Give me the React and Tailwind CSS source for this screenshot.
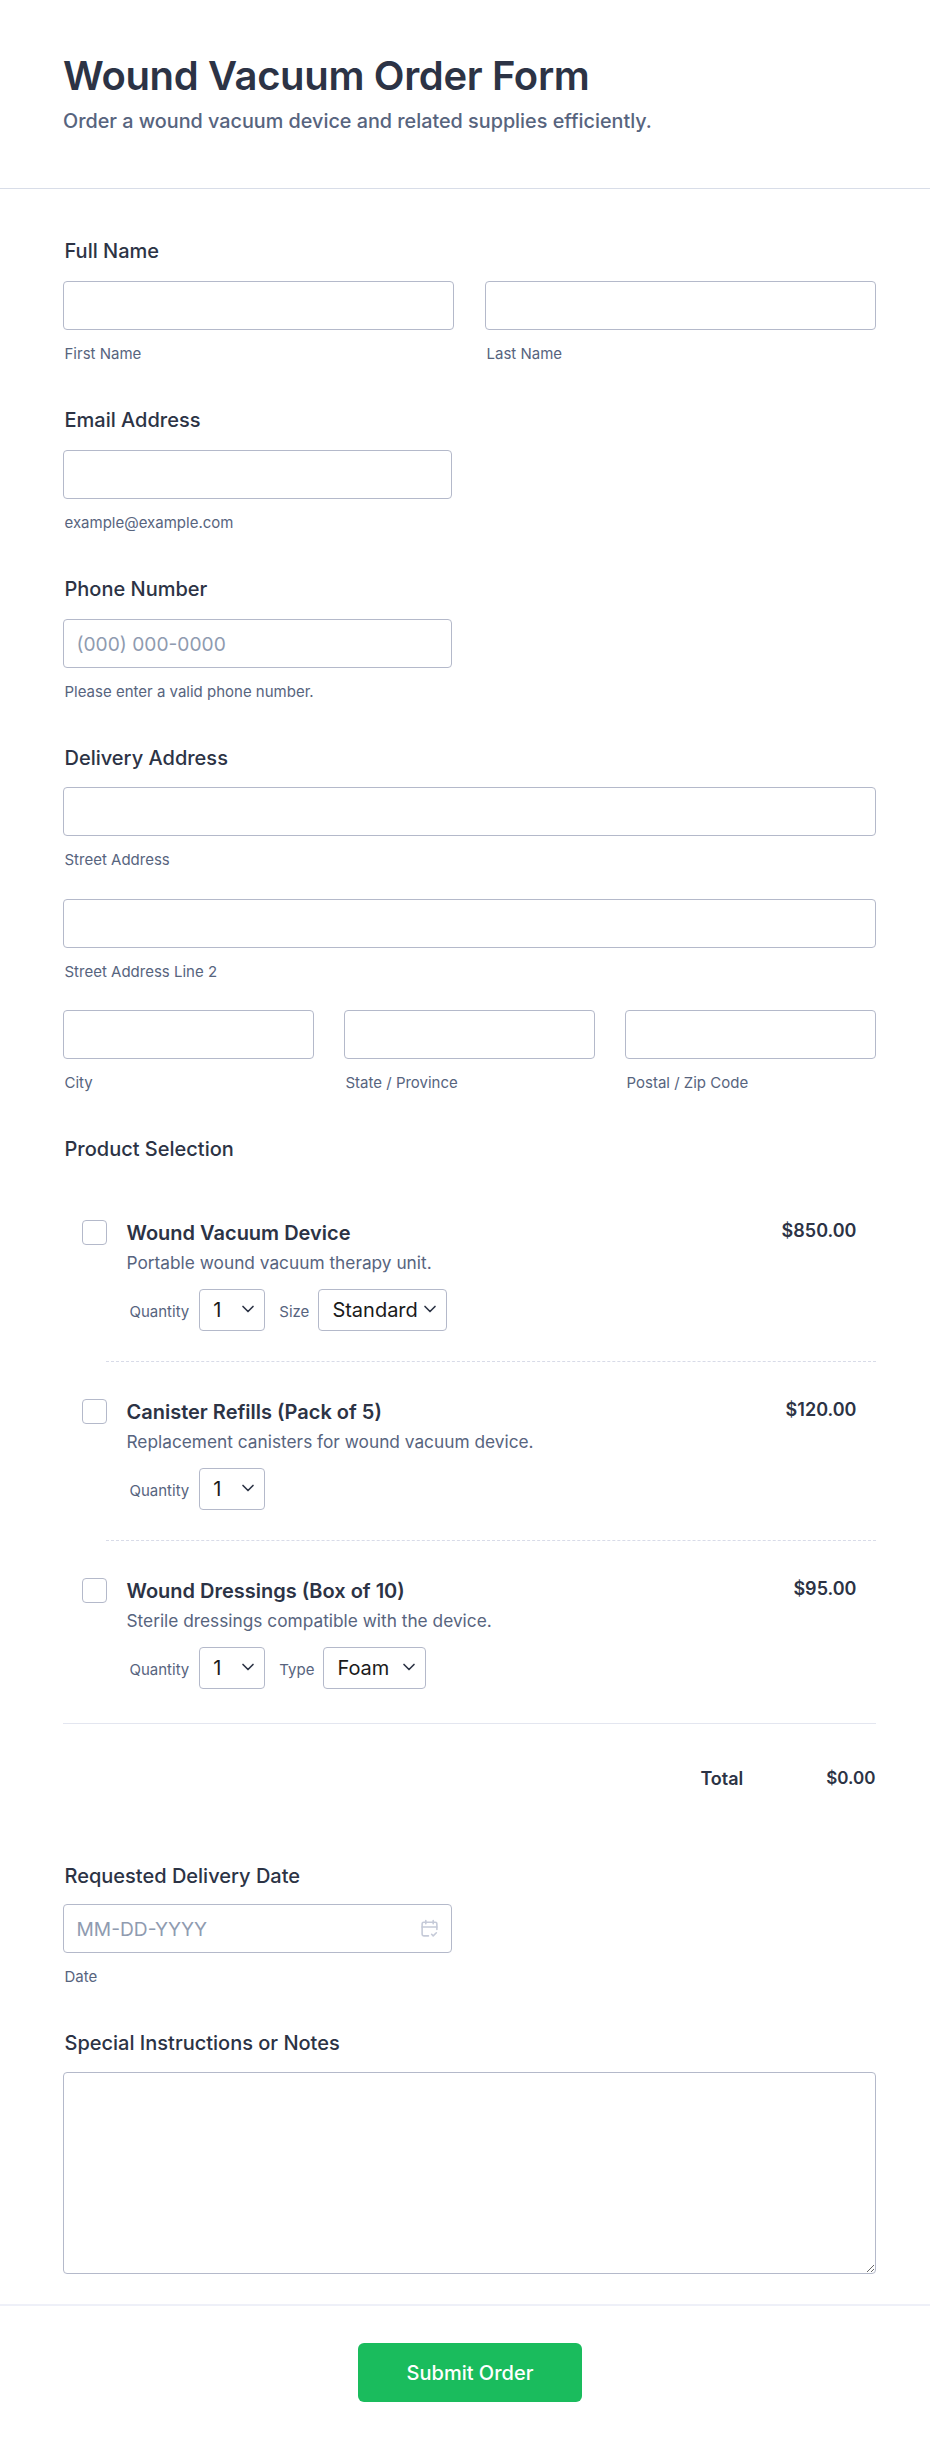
import React from 'react';
import { ChevronDown } from 'lucide-react';

const Label = ({ children }) => (
    <div className="pl-[2px] h-[28px] text-[20px] leading-[31px] font-medium text-[#2c3345]">{children}</div>
);

const Sub = ({ children }) => (
    <div className="pl-[2px] mt-[14px] h-[19px] text-[15px] leading-[20px] text-[#57647e]">{children}</div>
);

const TextInput = ({ placeholder }) => (
    <input
        type="text"
        placeholder={placeholder}
        className="block w-full h-[49px] px-[13px] bg-white border border-[#b4b9ca] rounded-[4px] text-[19.2px] text-[#2c3345] placeholder:text-[#8f9bb0] outline-none"
    />
);

const Select = ({ options, width }) => (
    <div className={`relative h-[42px] ${width}`}>
        <select className="block w-full h-full pl-[13px] pr-[24px] appearance-none bg-white border border-[#b4b9ca] rounded-[4px] text-[20px] text-[#1a1a1a] outline-none">
            {options.map(o => <option key={o}>{o}</option>)}
        </select>
        <ChevronDown className="absolute right-[7px] top-[10px] w-[20px] h-[20px] text-[#2c3345] pointer-events-none" strokeWidth={2} />
    </div>
);

const Product = ({ title, desc, price, extraLabel, extraOptions, extraWidth, pt, pb }) => (
    <div className={`flex pl-[19px] pr-[19px] ${pt} ${pb}`}>
        <div className="w-[25px] h-[25px] shrink-0 bg-white border border-[#b4b9ca] rounded-[4px]" />
        <div className="ml-[20px] flex-1 min-w-0">
            <div className="flex justify-between">
                <div className="text-[20px] leading-[27px] h-[25px] font-semibold text-[#2c3345]">{title}</div>
                <div className="text-[18px] leading-[22px] font-semibold text-[#2c3345]">{price}</div>
            </div>
            <div className="mt-[6px] text-[17.3px] leading-[24px] text-[#57647e]">{desc}</div>
            <div className="mt-[14px] flex items-center">
                <span className="ml-[3px] mr-[10px] mt-[4px] text-[15px] text-[#57647e]">Quantity</span>
                <Select options={['1', '2', '3']} width="w-[66px]" />
                {extraLabel && (
                    <>
                        <span className="ml-[14px] mr-[9px] mt-[4px] text-[15px] text-[#57647e]">{extraLabel}</span>
                        <Select options={extraOptions} width={extraWidth} />
                    </>
                )}
            </div>
        </div>
    </div>
);

export default function App() {
    return (
        <div className="w-[930px] min-h-[2451px] bg-white font-['Inter',sans-serif]">
            {/* Header */}
            <div className="h-[189px] px-[63px] pt-[48px] border-b border-[#d8dde8]">
                <h1 className="text-[40px] leading-[56px] font-semibold tracking-[-0.35px] text-[#2c3345]">Wound Vacuum Order Form</h1>
                <p className="mt-[2px] text-[19.8px] leading-[30px] font-medium text-[#57647e]">Order a wound vacuum device and related supplies efficiently.</p>
            </div>

            <div className="pr-[54.5px] pl-[62.5px] pt-[47px]">
                {/* Full name */}
                <Label>Full Name</Label>
                <div className="mt-[17px] grid grid-cols-2 gap-[31px]">
                    <div><TextInput /><Sub>First Name</Sub></div>
                    <div><TextInput /><Sub>Last Name</Sub></div>
                </div>

                {/* Email */}
                <div className="mt-[42px]">
                    <Label>Email Address</Label>
                    <div className="mt-[17px] w-[389px]"><TextInput /></div>
                    <Sub>example@example.com</Sub>
                </div>

                {/* Phone */}
                <div className="mt-[42px]">
                    <Label>Phone Number</Label>
                    <div className="mt-[17px] w-[389px]"><TextInput placeholder="(000) 000-0000" /></div>
                    <Sub>Please enter a valid phone number.</Sub>
                </div>

                {/* Address */}
                <div className="mt-[42px]">
                    <Label>Delivery Address</Label>
                    <div className="mt-[16px]"><TextInput /></div>
                    <Sub>Street Address</Sub>
                    <div className="mt-[30px]"><TextInput /></div>
                    <Sub>Street Address Line 2</Sub>
                    <div className="mt-[29px] grid grid-cols-3 gap-[30px]">
                        <div><TextInput /><Sub>City</Sub></div>
                        <div><TextInput /><Sub>State / Province</Sub></div>
                        <div><TextInput /><Sub>Postal / Zip Code</Sub></div>
                    </div>
                </div>

                {/* Products */}
                <div className="mt-[42px]">
                    <Label>Product Selection</Label>
                    <div className="mt-[20px]">
                        <Product
                            title="Wound Vacuum Device"
                            desc="Portable wound vacuum therapy unit."
                            price="$850.00"
                            extraLabel="Size"
                            extraOptions={['Standard', 'Large']}
                            extraWidth="w-[129px]"
                            pt="pt-[38px]"
                            pb="pb-[30px]"
                        />
                        <div className="ml-[43px] border-t border-dashed border-[#d8dbe8]" />
                        <Product
                            title="Canister Refills (Pack of 5)"
                            desc="Replacement canisters for wound vacuum device."
                            price="$120.00"
                            pt="pt-[37px]"
                            pb="pb-[30px]"
                        />
                        <div className="ml-[43px] border-t border-dashed border-[#d8dbe8]" />
                        <Product
                            title="Wound Dressings (Box of 10)"
                            desc="Sterile dressings compatible with the device."
                            price="$95.00"
                            extraLabel="Type"
                            extraOptions={['Foam', 'Gauze']}
                            extraWidth="w-[103px]"
                            pt="pt-[37px]"
                            pb="pb-[34px]"
                        />
                        <div className="border-t border-[#e3e6f0]" />
                    </div>
                    <div className="mt-[42px] flex justify-end leading-[24px] font-semibold text-[#2c3345]">
                        <span className="mt-[1px] text-[18px]">Total</span>
                        <span className="ml-[83px] text-[17px]">$0.00</span>
                    </div>
                </div>

                {/* Date */}
                <div className="mt-[70px]">
                    <Label>Requested Delivery Date</Label>
                    <div className="relative mt-[15px] w-[389px]">
                        <TextInput placeholder="MM-DD-YYYY" />
                        <svg className="absolute right-[13px] top-[15px] w-[19px] h-[19px] text-[#c5cad8]" viewBox="0 0 18 18" fill="none" stroke="currentColor" strokeWidth="1.5" strokeLinecap="round" strokeLinejoin="round">
                            <path d="M8 16H3.500A1.500 1.500 0 0 1 2 14.500V4.500A1.500 1.500 0 0 1 3.500 3h11A1.500 1.500 0 0 1 16 4.500V10" />
                            <path d="M5.500 1.500v3M12.500 1.500v3M2 7.500h14" />
                            <path d="M11 14.500l1.500 1.500 3-3" />
                        </svg>
                    </div>
                    <Sub>Date</Sub>
                </div>

                {/* Notes */}
                <div className="mt-[42px]">
                    <Label>Special Instructions or Notes</Label>
                    <textarea className="block mt-[16px] w-full h-[202px] px-[13px] py-[8px] bg-white border border-[#b4b9ca] rounded-[4px] text-[18px] outline-none resize-y" />
                </div>
            </div>

            {/* Footer */}
            <div className="mt-[30px] h-[148px] bg-white border-t-2 border-[#eef0f8] flex justify-center pl-[10px] pt-[37px]">
                <button className="w-[224px] h-[59px] rounded-[6px] bg-[#1abc5d] text-white text-[20px] font-medium">Submit Order</button>
            </div>
        </div>
    );
}
